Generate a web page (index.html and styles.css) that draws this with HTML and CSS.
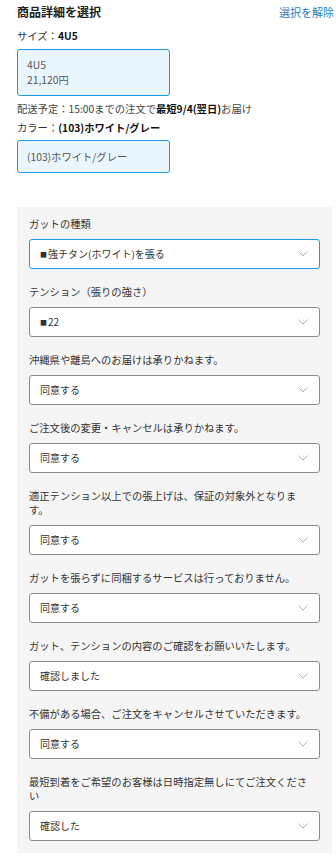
FILE: index.html
```html
<!DOCTYPE html>
<html lang="ja">
<head>
    <meta charset="UTF-8">
    <meta name="viewport" content="width=device-width, initial-scale=1.0">
    <title>商品詳細を選択</title>
    <link rel="stylesheet" href="styles.css">
</head>
<body>
    <div class="page">
        <div class="head">
            <h2 class="title">商品詳細を選択</h2>
            <a class="clear" href="#">選択を解除</a>
        </div>

        <p class="spec">サイズ：<b>4U5</b></p>
        <div class="choice">
            <div>4U5</div>
            <div>21,120円</div>
        </div>
        <p class="ship">配送予定：15:00までの注文で<b>最短9/4(翌日)</b>お届け</p>

        <p class="spec color-spec">カラー：<b>(103)ホワイト/グレー</b></p>
        <div class="choice">
            <div>(103)ホワイト/グレー</div>
        </div>

        <div class="options" id="options"></div>
    </div>

    <script>
        const options = [
            { label: "ガットの種類", value: "<i>■</i>強チタン(ホワイト)を張る", focus: true },
            { label: "テンション（張りの強さ）", value: "<i>■</i>22" },
            { label: "沖縄県や離島へのお届けは承りかねます。", value: "同意する" },
            { label: "ご注文後の変更・キャンセルは承りかねます。", value: "同意する" },
            { label: "適正テンション以上での張上げは、保証の対象外となります。", value: "同意する" },
            { label: "ガットを張らずに同梱するサービスは行っておりません。", value: "同意する" },
            { label: "ガット、テンションの内容のご確認をお願いいたします。", value: "確認しました" },
            { label: "不備がある場合、ご注文をキャンセルさせていただきます。", value: "同意する" },
            { label: "最短到着をご希望のお客様は日時指定無しにてご注文ください", value: "確認した" }
        ];

        const box = document.getElementById("options");
        options.forEach(opt => {
            const field = document.createElement("div");
            field.className = "field";
            field.innerHTML = `
                <div class="label">${opt.label}</div>
                <div class="select${opt.focus ? " focus" : ""}">
                    <span>${opt.value}</span>
                    <svg width="10" height="6" viewBox="0 0 10 6"><polyline points="0.5,0.5 5,5 9.5,0.5" fill="none" stroke="#b0b0b0" stroke-width="1"/></svg>
                </div>
            `;
            box.appendChild(field);
        });
    </script>
</body>
</html>
```

FILE: styles.css
```css
body {
    margin: 0;
    font-family: "Noto Sans CJK JP", "Noto Sans", sans-serif;
    color: #333;
    font-size: 10.3px;
}
.page {
    padding: 4px 2px 0 17px;
}
.head {
    display: flex;
    justify-content: space-between;
    align-items: center;
    height: 16px;
}
.title {
    margin: 0;
    font-size: 12px;
    line-height: 16px;
    font-weight: bold;
    color: #222;
}
.clear {
    font-size: 11px;
    color: #1f7fc4;
    text-decoration: none;
    white-space: nowrap;
}
.spec {
    margin: 9px 0 0;
    line-height: 14px;
}
.spec b {
    color: #111;
}
.color-spec {
    margin-top: 5px;
}
.choice {
    width: 133px;
    margin-top: 6px;
    padding: 7px 9px 8px;
    line-height: 15px;
    border: 1px solid #1e9ae0;
    border-radius: 3px;
    background: #eaf6fd;
    color: #555;
}
.color-spec + .choice {
    margin-top: 5px;
    padding: 8px 9px;
}
.ship {
    margin: 6px 0 0;
    line-height: 14px;
    color: #444;
}
.ship b {
    color: #111;
}
.options {
    margin: 34px 2px 0 0;
    padding: 10px 12px 12px;
    background: #f5f5f5;
}
.field + .field {
    margin-top: 16.5px;
}
.label {
    line-height: 14px;
    padding-right: 6px;
    margin-bottom: 7.5px;
    color: #333;
}
.select {
    display: flex;
    justify-content: space-between;
    align-items: center;
    height: 28px;
    padding: 0 11px 0 10px;
    background: #fff;
    border: 1px solid #8c8c8c;
    border-radius: 3px;
    font-size: 10px;
    color: #333;
}
.select i {
    font-style: normal;
    font-size: 7px;
    margin-right: 1px;
    vertical-align: 1px;
}
.select.focus {
    border-color: #1e9ae0;
}
```
